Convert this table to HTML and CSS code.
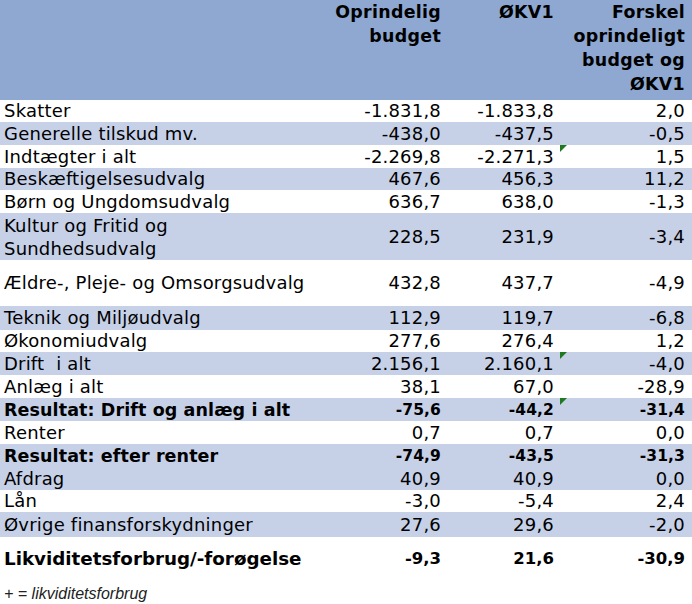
FILE: index.html
```html
<!DOCTYPE html>
<html lang="da">
<head>
<meta charset="utf-8">
<title>Budget</title>
<link rel="stylesheet" href="styles.css">
</head>
<body>
<table class="budget">
  <colgroup>
    <col class="c-label"><col class="c-num1"><col class="c-num2"><col class="c-num3">
  </colgroup>
  <thead>
    <tr class="head">
      <th></th>
      <th>Oprindelig<br>budget</th>
      <th>ØKV1</th>
      <th>Forskel<br>oprindeligt<br>budget og<br>ØKV1</th>
    </tr>
  </thead>
  <tbody>
    <tr class="w r22"><td>Skatter</td><td>-1.831,8</td><td>-1.833,8</td><td>2,0</td></tr>
    <tr class="b"><td>Generelle tilskud mv.</td><td>-438,0</td><td>-437,5</td><td>-0,5</td></tr>
    <tr class="w"><td>Indtægter i alt</td><td>-2.269,8</td><td>-2.271,3</td><td class="mark">1,5</td></tr>
    <tr class="b r22"><td>Beskæftigelsesudvalg</td><td>467,6</td><td>456,3</td><td>11,2</td></tr>
    <tr class="w"><td>Børn og Ungdomsudvalg</td><td>636,7</td><td>638,0</td><td>-1,3</td></tr>
    <tr class="b tall"><td>Kultur og Fritid og<br>Sundhedsudvalg</td><td>228,5</td><td>231,9</td><td>-3,4</td></tr>
    <tr class="w tall2"><td>Ældre-, Pleje- og Omsorgsudvalg</td><td>432,8</td><td>437,7</td><td>-4,9</td></tr>
    <tr class="b r24"><td>Teknik og Miljøudvalg</td><td>112,9</td><td>119,7</td><td>-6,8</td></tr>
    <tr class="w r22"><td>Økonomiudvalg</td><td>277,6</td><td>276,4</td><td>1,2</td></tr>
    <tr class="b"><td>Drift&nbsp; i alt</td><td>2.156,1</td><td>2.160,1</td><td class="mark">-4,0</td></tr>
    <tr class="w"><td>Anlæg i alt</td><td>38,1</td><td>67,0</td><td>-28,9</td></tr>
    <tr class="b bold"><td>Resultat: Drift og anlæg i alt</td><td>-75,6</td><td>-44,2</td><td class="mark">-31,4</td></tr>
    <tr class="w"><td>Renter</td><td>0,7</td><td>0,7</td><td>0,0</td></tr>
    <tr class="b bold"><td>Resultat: efter renter</td><td>-74,9</td><td>-43,5</td><td>-31,3</td></tr>
    <tr class="b"><td>Afdrag</td><td>40,9</td><td>40,9</td><td>0,0</td></tr>
    <tr class="w r22"><td>Lån</td><td>-3,0</td><td>-5,4</td><td>2,4</td></tr>
    <tr class="b r25"><td>Øvrige finansforskydninger</td><td>27,6</td><td>29,6</td><td>-2,0</td></tr>
    <tr class="w total"><td>Likviditetsforbrug/-forøgelse</td><td>-9,3</td><td>21,6</td><td>-30,9</td></tr>
  </tbody>
</table>
<p class="note">+ = likviditetsforbrug</p>
</body>
</html>
```

FILE: styles.css
```css
html, body {
  margin: 0;
  padding: 0;
  background: #ffffff;
}
body {
  width: 692px;
  font-family: "DejaVu Sans", Verdana, sans-serif;
  color: #000;
}
.budget {
  width: 692px;
  border-collapse: collapse;
  border-spacing: 0;
  table-layout: fixed;
  font-size: 18px;
  letter-spacing: 0.2px;
}
.c-label { width: 330px; }
.c-num1 { width: 117px; }
.c-num2 { width: 113px; }
.c-num3 { width: 132px; }

.budget th, .budget td {
  padding: 0 4px;
  text-align: right;
  white-space: nowrap;
}
.budget td:first-child {
  text-align: left;
}
.head {
  background: #8ea8d1;
  height: 100px;
}
.head th {
  vertical-align: top;
  font-weight: bold;
  font-size: 17.4px;
  letter-spacing: 0.3px;
  line-height: 24px;
  padding-top: 0;
  padding-right: 6px;
}
.head th:last-child { padding-right: 7px; }
.budget tbody tr { height: 23px; }
.budget tbody td {
  line-height: 20px;
  vertical-align: middle;
}
.budget tbody td:last-child { padding-right: 7px; }
.budget tbody td:nth-child(2),
.budget tbody td:nth-child(3) { padding-right: 6px; }
.w { background: #ffffff; }
.b { background: #c6d1e8; }
.budget tbody tr.r22 { height: 22px; }
.budget tbody tr.tall { height: 47px; }
.budget tbody tr.tall2 { height: 46px; }
.budget tbody tr.r24 { height: 24px; }
.budget tbody tr.r25 { height: 25px; }
.tall td:first-child { line-height: 23px; }
.bold td {
  font-weight: bold;
  font-size: 15.5px;
  letter-spacing: 0.1px;
}
.bold td:first-child { font-size: 17.5px; }
.budget tbody tr.total { height: 44px; }
.total td {
  font-weight: bold;
  font-size: 16.5px;
  letter-spacing: 0;
}
.total td:first-child { font-size: 18.3px; }
.mark {
  position: relative;
}
.mark::before {
  content: "";
  position: absolute;
  left: 0;
  top: 0;
  width: 0;
  height: 0;
  border-top: 7px solid #1f7a1f;
  border-right: 7px solid transparent;
}
.note {
  margin: 4px 0 0 4px;
  font-family: "Liberation Sans", Arial, sans-serif;
  font-style: italic;
  font-size: 16px;
  color: #222;
}
```
